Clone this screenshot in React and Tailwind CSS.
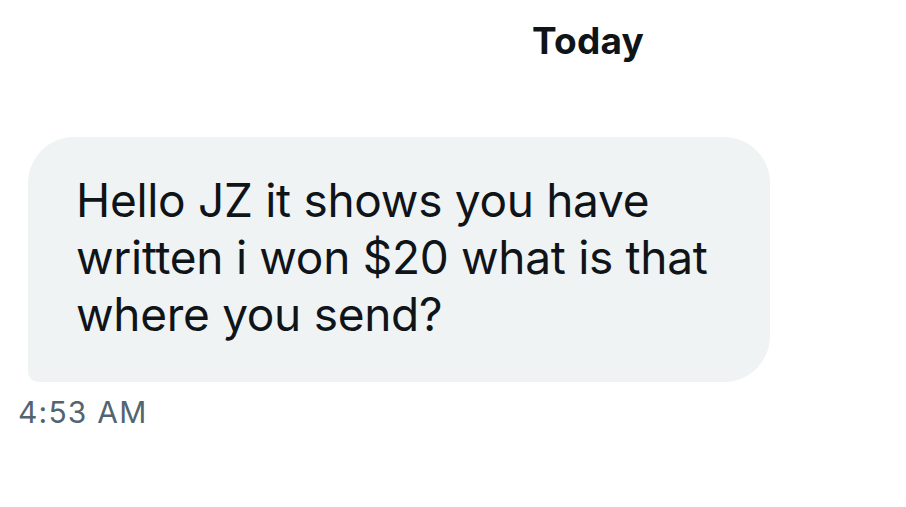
export default function App() {
  return (
    <div
      className="min-h-screen w-full bg-white"
      style={{ fontFamily: "Inter, 'Liberation Sans', sans-serif" }}
    >
      <div className="flex justify-center pl-[270px] pt-[19px]">
        <h2 className="text-[37px] font-bold leading-[44px] tracking-[0.2px] text-[#0f1419]">Today</h2>
      </div>

      <div className="mt-[74px] pl-[28px]">
        <div className="w-[742px] rounded-[46px] rounded-bl-[10px] bg-[#eff3f4] pl-[48px] pr-[30px] pt-[35px] pb-[39px]">
          <p className="text-[46px] leading-[57px] tracking-[-0.3px] text-[#0f1419]">
            Hello JZ it shows you have written i won $20 what is that where you send?
          </p>
        </div>
        <div className="mt-[12px] -ml-[10px] text-[30px] leading-[37px] tracking-[1.2px] text-[#536471]">
          4:53 AM
        </div>
      </div>
    </div>
  );
}
